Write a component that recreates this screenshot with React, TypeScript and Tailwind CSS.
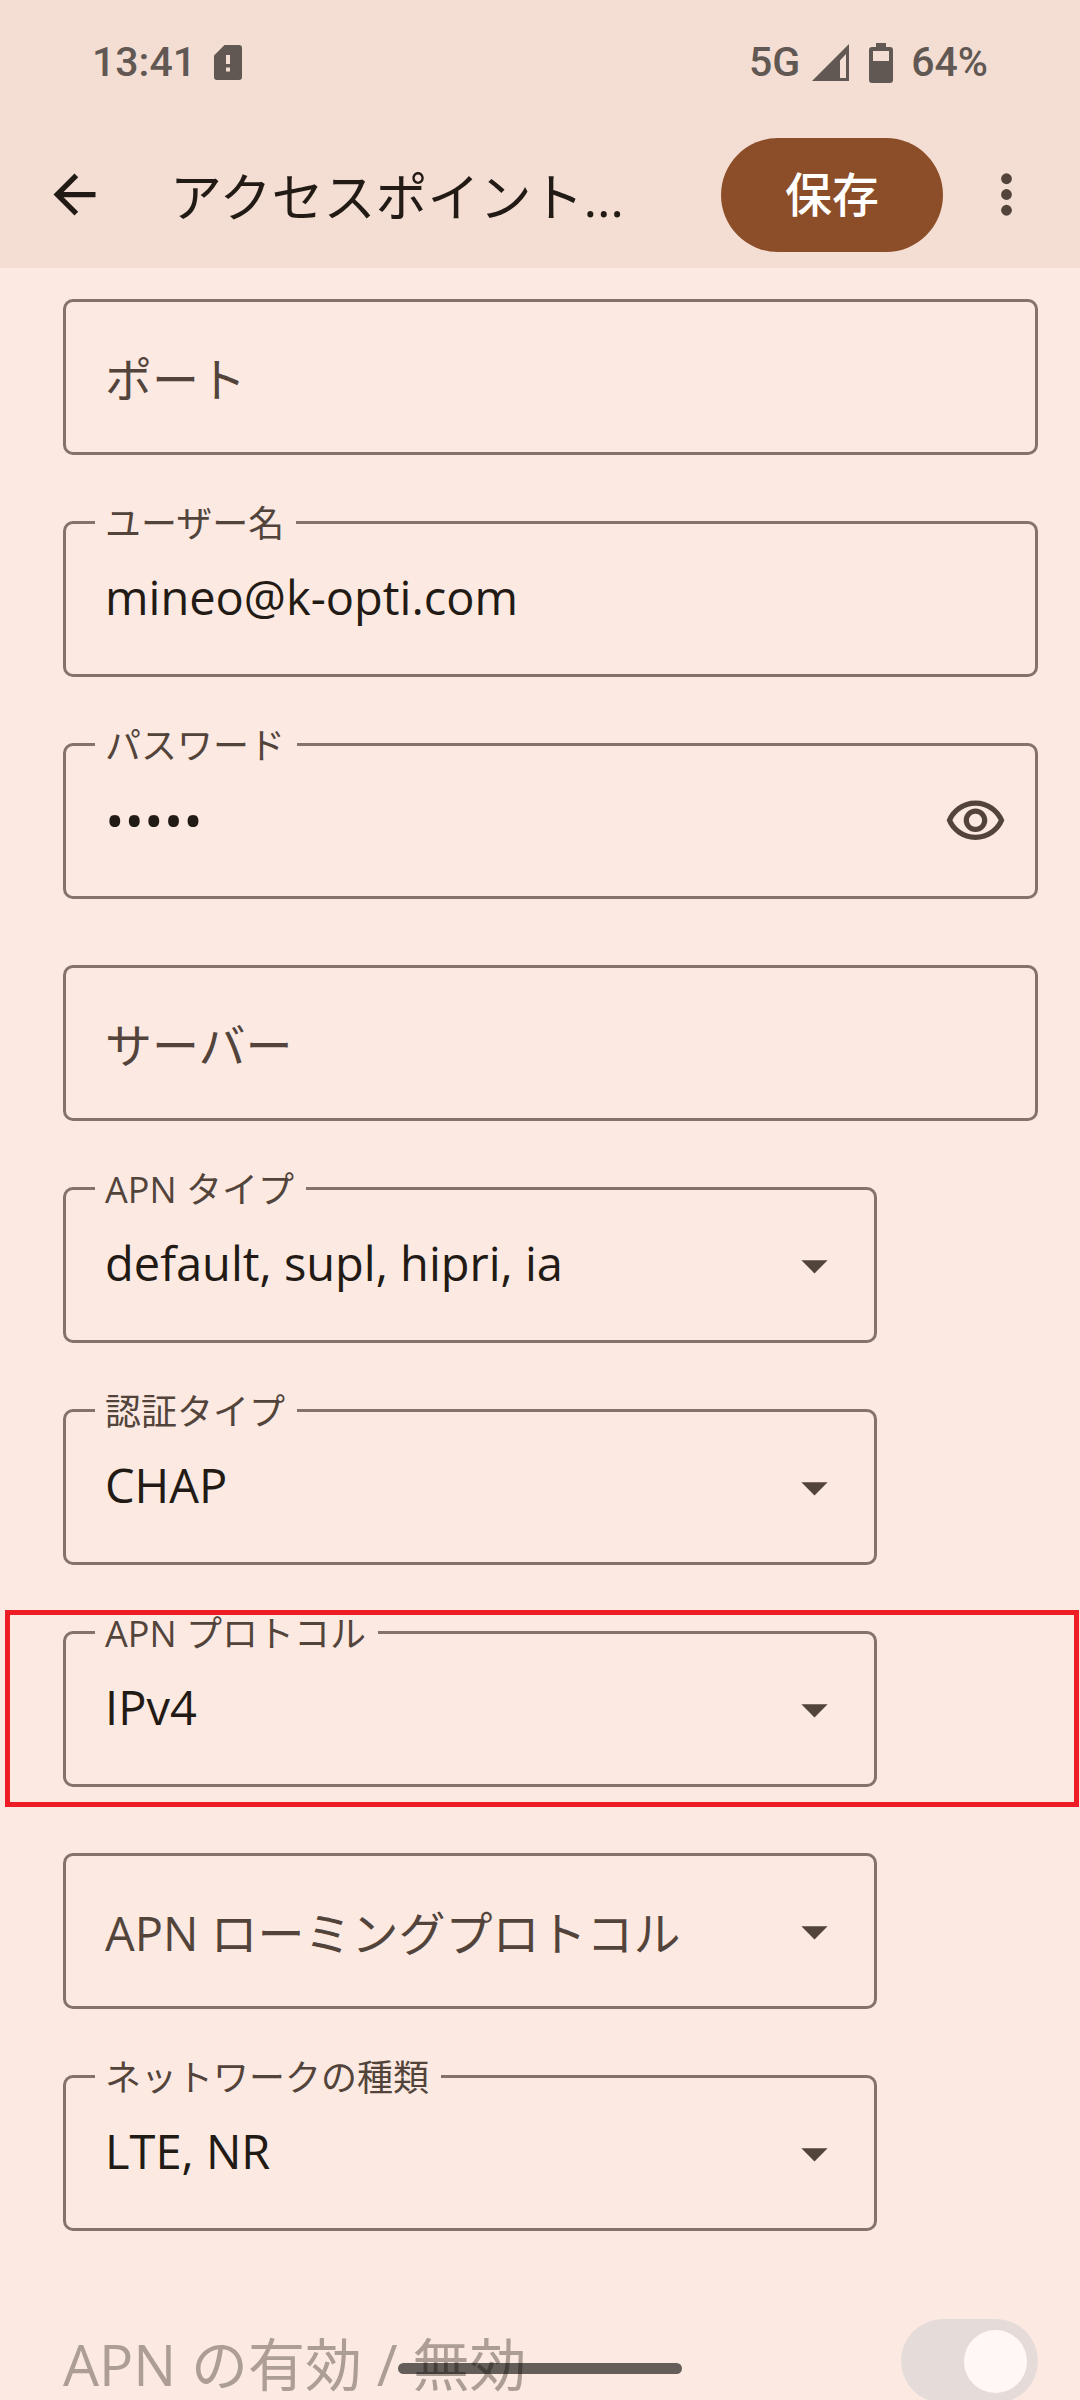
import React, { useState } from 'react'
import clsx from 'clsx'

interface FieldProps {
  id: string
  label: string
  value: string
}

interface SelectFieldProps extends FieldProps {
  highlighted?: boolean
}

const fieldBox = 'relative flex h-[156px] items-center rounded-[10px] border-3 border-[#85736b] pr-7 pl-[39px]'
const control = 'h-full min-w-0 flex-1 appearance-none bg-transparent pb-1 text-[#221a14] outline-none'

// The label sits on the outline once the field has a value, and inside the box while it is empty
function FieldLabel({ id, label, floating }: { id: string; label: string; floating: boolean }) {
  return (
    <label
      htmlFor={id}
      className={
        floating
          ? 'absolute -top-[26px] left-[29px] bg-[#fce9e2] pr-3 pl-[10px] text-[36px] leading-[52px] whitespace-nowrap text-[#53443b]'
          : 'pointer-events-none absolute inset-y-0 left-[39px] flex items-center pt-1 text-[47px] whitespace-nowrap text-[#53443b]'
      }
    >
      {label}
    </label>
  )
}

function TextField({ id, label, value }: FieldProps) {
  const [text, setText] = useState(value)

  return (
    <div className={fieldBox}>
      <input
        id={id}
        type="text"
        value={text}
        onChange={e => setText(e.target.value)}
        className={clsx(control, 'text-[47px]')}
      />
      <FieldLabel id={id} label={label} floating={text !== ''} />
    </div>
  )
}

function PasswordField({ id, label, value }: FieldProps) {
  const [text, setText] = useState(value)
  const [visible, setVisible] = useState(false)

  return (
    <div className={fieldBox}>
      <input
        id={id}
        type={visible ? 'text' : 'password'}
        value={text}
        onChange={e => setText(e.target.value)}
        className={clsx(control, visible ? 'text-[47px]' : 'text-[52px]')}
      />
      <FieldLabel id={id} label={label} floating={text !== ''} />
      <button type="button" aria-label="パスワードを表示" onClick={() => setVisible(!visible)}>
        <svg viewBox="0 0 24 24" className="size-[63px] fill-[#53443b]" aria-hidden="true">
          <path d="M12 6c3.79 0 7.17 2.13 8.82 5.5C19.17 14.87 15.79 17 12 17s-7.17-2.13-8.82-5.5C4.83 8.13 8.21 6 12 6m0-2C7 4 2.73 7.11 1 11.5 2.73 15.89 7 19 12 19s9.27-3.11 11-7.5C21.27 7.11 17 4 12 4zm0 5c1.38 0 2.5 1.12 2.5 2.5S13.38 14 12 14s-2.5-1.12-2.5-2.5S10.62 9 12 9m0-2c-2.48 0-4.5 2.02-4.5 4.5S9.52 16 12 16s4.5-2.02 4.5-4.5S14.48 7 12 7z" />
        </svg>
      </button>
    </div>
  )
}

function SelectField({ id, label, value, highlighted }: SelectFieldProps) {
  return (
    <div className="relative pr-[161px]">
      <div className={fieldBox}>
        <select id={id} defaultValue={value} className={clsx(control, 'text-[47px]')}>
          <option value={value}>{value}</option>
        </select>
        <FieldLabel id={id} label={label} floating={value !== ''} />
        <svg viewBox="0 0 24 24" className="pointer-events-none size-[63px] fill-[#53443b]" aria-hidden="true">
          <path d="M7 10l5 5 5-5z" />
        </svg>
      </div>
      {highlighted && (
        <div className="pointer-events-none absolute -top-[21px] -right-[41px] -bottom-5 -left-[58px] border-5 border-[#ee1c25]" />
      )}
    </div>
  )
}

function StatusBar() {
  return (
    <div className="flex h-[121px] items-center justify-between px-[92px] pt-1 font-['Roboto',sans-serif] text-[41px] font-medium text-[#625853]">
      <div className="flex items-center gap-[18px]">
        <span>13:41</span>
        <svg viewBox="0 0 28 35" className="h-[35px] w-7" aria-hidden="true">
          <path
            fill="currentColor"
            fillRule="evenodd"
            d="M10.5 0H25a3 3 0 0 1 3 3v29a3 3 0 0 1-3 3H3a3 3 0 0 1-3-3V10.5zM12 10v9h4v-9zM12 22.5v4h4v-4z"
          />
        </svg>
      </div>
      <div className="flex items-center">
        <span>5G</span>
        <svg viewBox="0 0 37 37" className="ml-3 size-[37px]" aria-hidden="true">
          <path fill="currentColor" fillRule="evenodd" d="M37 0v37H0zM34 10l-6 6.5V34h6z" />
        </svg>
        <svg viewBox="0 0 24 40" className="ml-5 h-10 w-6" aria-hidden="true">
          <path
            fill="currentColor"
            fillRule="evenodd"
            d="M7 0h10v4h4a3 3 0 0 1 3 3v30a3 3 0 0 1-3 3H3a3 3 0 0 1-3-3V7a3 3 0 0 1 3-3h4zM4 8v10h16V8z"
          />
        </svg>
        <span className="ml-[18px]">64%</span>
      </div>
    </div>
  )
}

function AppBar() {
  return (
    <div className="flex h-[147px] items-center pr-[42px] pl-[43px]">
      <button type="button" aria-label="戻る">
        <svg viewBox="0 0 24 24" className="size-[63px] fill-[#221a14]" aria-hidden="true">
          <path d="M20 11H7.83l5.59-5.59L12 4l-8 8 8 8 1.41-1.41L7.83 13H20v-2z" />
        </svg>
      </button>
      <h1 className="ml-[64px] min-w-0 flex-1 truncate pt-1 text-[52px] text-[#221a14]">アクセスポイント…</h1>
      <button type="button" className="h-[114px] w-[222px] rounded-full bg-[#8c4e28] text-[47px] font-medium text-white">
        保存
      </button>
      <button type="button" aria-label="その他のオプション" className="ml-8">
        <svg viewBox="0 0 24 24" className="size-[63px] fill-[#53443b]" aria-hidden="true">
          <circle cx="12" cy="6" r="2.05" />
          <circle cx="12" cy="12" r="2.05" />
          <circle cx="12" cy="18" r="2.05" />
        </svg>
      </button>
    </div>
  )
}

export default function App() {
  return (
    <div className="relative flex h-screen flex-col overflow-hidden bg-[#fce9e2] font-['Open_Sans','Noto_Sans_CJK_JP',sans-serif]">
      <header className="shrink-0 bg-[#f4ded3]">
        <StatusBar />
        <AppBar />
      </header>

      <main className="flex-1 overflow-y-auto pt-[31px] pr-[42px] pl-[63px] [scrollbar-width:none]">
        <form className="flex flex-col gap-[66px]" onSubmit={e => e.preventDefault()}>
          <TextField id="port" label="ポート" value="" />
          <TextField id="user" label="ユーザー名" value="mineo@k-opti.com" />
          <PasswordField id="password" label="パスワード" value="mineo" />
          <TextField id="server" label="サーバー" value="" />
          <SelectField id="apn-type" label="APN タイプ" value="default, supl, hipri, ia" />
          <SelectField id="auth-type" label="認証タイプ" value="CHAP" />
          <SelectField id="protocol" label="APN プロトコル" value="IPv4" highlighted />
          <SelectField id="roaming" label="APN ローミングプロトコル" value="" />
          <SelectField id="network" label="ネットワークの種類" value="LTE, NR" />

          <div className="mt-[22px] flex h-[84px] items-center justify-between">
            <label htmlFor="apn-enabled" className="pt-2 text-[57px] whitespace-nowrap text-[#ac9d95]">
              APN の有効 / 無効
            </label>
            <span className="relative flex">
              <input
                id="apn-enabled"
                type="checkbox"
                role="switch"
                defaultChecked
                disabled
                className="peer h-[84px] w-[137px] appearance-none rounded-full bg-[#e5dcda]"
              />
              <span className="pointer-events-none absolute top-[11px] left-[11px] size-[63px] rounded-full bg-[#fff8f5] peer-checked:right-[11px] peer-checked:left-auto" />
            </span>
          </div>
        </form>
      </main>

      <div className="pointer-events-none absolute inset-x-0 bottom-[26px] flex justify-center">
        <div className="h-[11px] w-[284px] rounded-full bg-black/60" />
      </div>
    </div>
  )
}
